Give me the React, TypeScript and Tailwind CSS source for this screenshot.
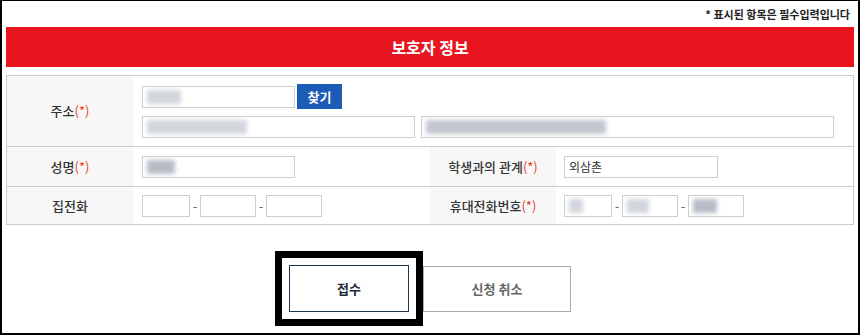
import React from "react";

const font = { fontFamily: '"Noto Sans CJK KR", "Noto Sans", sans-serif' };

function Req() {
  return <span className="text-[#e8412f] font-normal">(*)</span>;
}

function Blur({ w, shade = "bg-gray-300" }: { w: number; shade?: string }) {
  return <span className={`inline-block h-[14px] blur-[2px] ${shade}`} style={{ width: w }} />;
}

function Field({ w, children }: { w: string; children?: React.ReactNode }) {
  return (
    <div className={`${w} h-[22px] border border-[#cfcfcf] bg-white flex items-center px-[4px] text-[12px] text-[#333] overflow-hidden`}>
      {children}
    </div>
  );
}

function Dash() {
  return <span className="w-[10px] text-center text-[12px] text-[#555]">-</span>;
}

function Label({ children }: { children: React.ReactNode }) {
  return (
    <div className="bg-[#f7f7f7] flex items-center justify-center text-[13px] text-[#333] font-medium">
      {children}
    </div>
  );
}

export default function App() {
  return (
    <div
      style={font}
      className="w-[860px] h-[335px] border-l-2 border-r-2 border-t border-b-2 border-black bg-white px-[4px] overflow-hidden"
    >
      <div className="h-[26px] flex items-center justify-end pr-[4px] text-[11px] font-bold text-[#222]">
        * 표시된 항목은 필수입력입니다
      </div>
      <div className="h-[40px] bg-[#e8141f] flex items-center justify-center text-white text-[16px] font-bold">
        보호자 정보
      </div>

      <div className="mt-[8px] border border-[#cccccc] grid grid-cols-[126px_297px_126px_1fr]">
        {/* 주소 */}
        <div className="h-[70px] bg-[#f7f7f7] flex items-center justify-center text-[13px] text-[#333] font-medium">
          주소<Req />
        </div>
        <div className="col-span-3 h-[70px] pl-[9px] pt-[8px] flex flex-col gap-[7px]">
          <div className="flex items-center gap-[2px]">
            <Field w="w-[153px]">
              <Blur w={34} />
            </Field>
            <button className="w-[45px] h-[25px] bg-[#1a5cb6] text-white text-[13px] font-bold">찾기</button>
          </div>
          <div className="flex items-center gap-[6px]">
            <Field w="w-[273px]">
              <Blur w={100} />
            </Field>
            <Field w="w-[413px]">
              <Blur w={180} shade="bg-gray-400/60" />
            </Field>
          </div>
        </div>

        {/* 성명 / 관계 */}
        <div className="col-span-4 grid grid-cols-[126px_297px_126px_1fr] border-t border-[#cccccc] h-[40px]">
          <Label>
            성명<Req />
          </Label>
          <div className="flex items-center pl-[9px]">
            <Field w="w-[153px]">
              <Blur w={28} shade="bg-gray-400/70" />
            </Field>
          </div>
          <Label>
            학생과의 관계<Req />
          </Label>
          <div className="flex items-center pl-[8px]">
            <Field w="w-[154px]">외삼촌</Field>
          </div>
        </div>

        {/* 전화 */}
        <div className="col-span-4 grid grid-cols-[126px_297px_126px_1fr] border-t border-[#cccccc] h-[38px]">
          <Label>집전화</Label>
          <div className="flex items-center pl-[9px]">
            <Field w="w-[48px]" />
            <Dash />
            <Field w="w-[56px]" />
            <Dash />
            <Field w="w-[56px]" />
          </div>
          <Label>
            휴대전화번호<Req />
          </Label>
          <div className="flex items-center pl-[8px]">
            <Field w="w-[48px]">
              <Blur w={14} />
            </Field>
            <Dash />
            <Field w="w-[56px]">
              <Blur w={22} />
            </Field>
            <Dash />
            <Field w="w-[56px]">
              <Blur w={24} shade="bg-gray-400/70" />
            </Field>
          </div>
        </div>
      </div>

      <div className="mt-[26px] flex items-center justify-center pr-[14px]">
        <div className="w-[148px] h-[75px] border-[7px] border-black p-[7px]">
          <button className="w-full h-full border border-[#1f3550] bg-white text-[13px] font-bold text-[#1f2a3a]">
            접수
          </button>
        </div>
        <button className="w-[148px] h-[46px] border border-[#aaaaaa] bg-white text-[13px] font-bold text-[#666]">
          신청 취소
        </button>
      </div>
    </div>
  );
}
